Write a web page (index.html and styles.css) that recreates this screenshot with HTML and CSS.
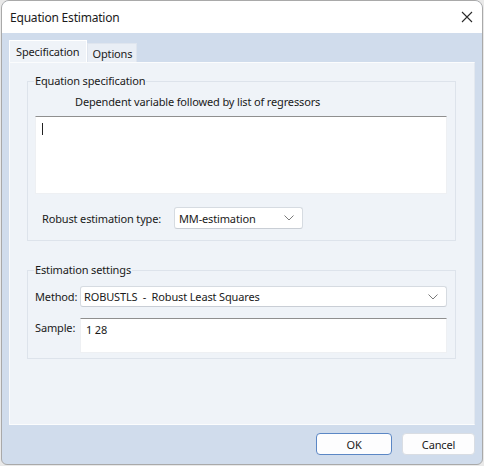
FILE: index.html
```html
<!DOCTYPE html>
<html>
<head>
<meta charset="utf-8">
<link rel="stylesheet" href="styles.css">
</head>
<body>
<div class="window">
  <div class="titlebar">
    <span class="title">Equation Estimation</span>
    <svg class="close" width="12" height="12" viewBox="0 0 12 12"><path d="M1 1L11 11M11 1L1 11" stroke="#2b2b2b" stroke-width="1.1" fill="none"/></svg>
  </div>
  <div class="client">
    <div class="tabs">
      <div class="tab active">Specification</div>
      <div class="tab">Options</div>
    </div>
    <div class="panel">
      <fieldset class="group group-spec">
        <legend>Equation specification</legend>
        <div class="desc">Dependent variable followed by list of regressors</div>
        <div class="textbox eqbox"><span class="caret"></span></div>
        <div class="row robust">
          <span class="label">Robust estimation type:</span>
          <div class="combo combo-small"><span>MM-estimation</span>
            <svg width="10" height="6" viewBox="0 0 10 6"><path d="M0.5 0.5L5 5L9.5 0.5" stroke="#7a7a7a" fill="none"/></svg>
          </div>
        </div>
      </fieldset>
      <fieldset class="group group-est">
        <legend>Estimation settings</legend>
        <div class="row">
          <span class="label lab2">Method:</span>
          <div class="combo combo-wide"><span>ROBUSTLS&nbsp; - &nbsp;Robust Least Squares</span>
            <svg width="10" height="6" viewBox="0 0 10 6"><path d="M0.5 0.5L5 5L9.5 0.5" stroke="#7a7a7a" fill="none"/></svg>
          </div>
        </div>
        <div class="row sample">
          <span class="label lab2">Sample:</span>
          <div class="textbox samplebox">1 28</div>
        </div>
      </fieldset>
    </div>
    <div class="buttons">
      <button class="btn ok">OK</button>
      <button class="btn">Cancel</button>
    </div>
  </div>
</div>
</body>
</html>
```
FILE: styles.css
```css
* { box-sizing: border-box; }
html, body { margin: 0; padding: 0; }
body {
  width: 484px;
  height: 466px;
  background: #e9e9e9;
  font-family: "Noto Sans", "Liberation Sans", sans-serif;
  font-size: 11px;
  letter-spacing: -0.15px;
  color: #1a1a1a;
  overflow: hidden;
}
.window {
  margin-left: 1px;
  width: 482px;
  height: 465px;
  border: 1px solid #a9a9a9;
  border-radius: 8px 8px 6px 6px;
  overflow: hidden;
  display: flex;
  flex-direction: column;
  background: #d0dcec;
}
.titlebar {
  height: 32px;
  flex: none;
  background: #ffffff;
  display: flex;
  align-items: center;
  justify-content: space-between;
  padding: 0 9px 0 8px;
}
.title { font-size: 12px; letter-spacing: -0.2px; color: #1b1b1b; }
.close { display: block; }
.client {
  flex: 1;
  display: flex;
  flex-direction: column;
  padding: 7px 6px 0 7px;
}
.tabs {
  display: flex;
  align-items: flex-end;
  height: 22px;
}
.tab {
  height: 19px;
  padding: 0 4px 0 5px;
  background: #e9eef5;
  border: 1px solid #dfe5ee;
  border-bottom: none;
  display: flex;
  align-items: center;
}
.tab.active {
  height: 22px;
  background: #eff3f8;
  padding: 0 6px 0 6px;
  border-color: #ffffff;
}
.panel {
  height: 363px;
  width: 466px;
  background: #eff3f8;
  border: 1px solid #fbfcfd;
  border-right-color: #e3e8ef;
  padding: 10px 18px 0 17px;
}
.group {
  margin: 0;
  border: 1px solid #dde3eb;
  padding: 0 8px 0 7px;
  min-width: 0;
}
legend {
  padding: 0 1px;
  margin-left: -1px;
  line-height: 16px;
}
.group-spec { padding-bottom: 11px; }
.desc {
  margin-top: 5px;
  line-height: 16px;
  padding-left: 40px;
}
.textbox {
  background: #ffffff;
  border: 1px solid #eef0f3;
  border-top-color: #8f8f8f;
}
.eqbox {
  margin-top: 6px;
  height: 78px;
  padding: 6px 6px;
}
.caret {
  display: block;
  width: 1px;
  height: 12px;
  background: #222;
}
.row { display: flex; align-items: center; }
.robust { margin-top: 13px; }
.label { padding-left: 7px; width: 139px; }
.lab2 { padding-left: 0; width: 45px; }
.combo {
  background: #ffffff;
  border: 1px solid #d6dbe1;
  border-bottom-color: #c9ced5;
  border-radius: 3px;
  display: flex;
  align-items: center;
  justify-content: space-between;
  padding: 0 8px 0 4px;
}
.combo-small { width: 129px; height: 22px; }
.combo-wide { flex: 1; height: 21px; padding-left: 3px; }
.group-est {
  margin-top: 21px;
  padding-top: 8px;
  padding-bottom: 5px;
}
.group-est legend { margin-bottom: -8px; }
.group-est .row:first-of-type { margin-top: 8px; }
.sample { margin-top: 11px; align-items: flex-start; }
.sample .label { margin-top: 2px; }
.samplebox {
  flex: 1;
  height: 35px;
  padding: 3px 5px;
}
.buttons {
  display: flex;
  justify-content: flex-end;
  gap: 10px;
  margin-top: 8px;
  padding-right: 1px;
}
.btn {
  font-family: inherit;
  font-size: 11px;
  letter-spacing: -0.15px;
  color: #1a1a1a;
  height: 22px;
  background: #fdfdfe;
  border: 1px solid #d9dde3;
  border-radius: 4px;
  padding: 0;
}
.btn.ok { width: 76px; border-color: #5b87c5; }
.btn:not(.ok) { width: 73px; }
```
